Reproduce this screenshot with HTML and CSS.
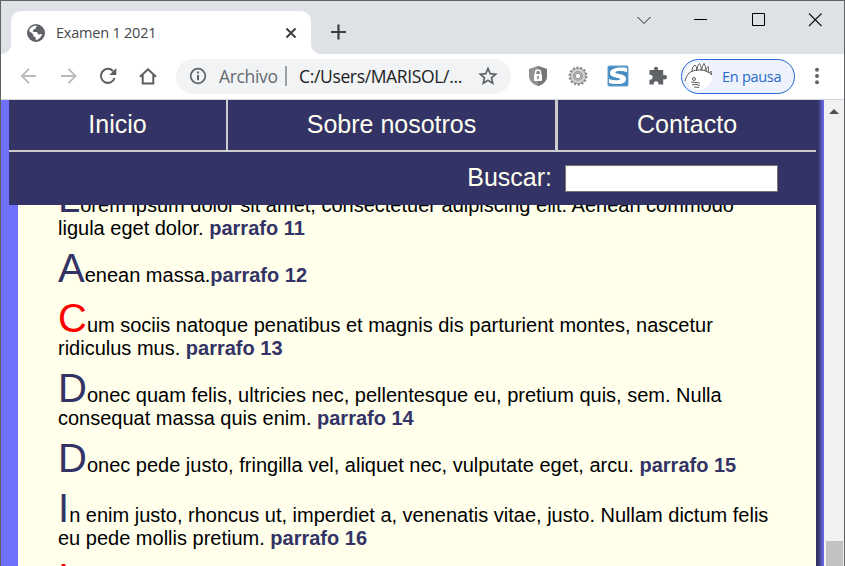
FILE: index.html
```html
<!DOCTYPE html>
<html lang="es">
<head>
<meta charset="utf-8">
<title>Examen 1 2021</title>
<link rel="stylesheet" href="styles.css">
</head>
<body>
<div class="window">
  <div class="tabstrip">
    <div class="tab">
      <svg class="globe" width="18" height="18" viewBox="0 0 18 18"><circle cx="9" cy="9" r="9" fill="#5f6368"/><path d="M10.4 2c-1 .8-1.600 1-1.700 2.200-.2.900-1.400.8-2 1.200-.8.600-.3 1.600-1.300 2.100L7.600 8c.7.200 2-.2 2.700.4.8.700 0 1.600 1 2 1.100.3 1.700-.7 3.600-.4-.5 3.200-3.200 5.800-6.200 6 .1-1.300.2-2.300-.6-2.900-.9-.5-1.600-.3-1.800-1.300-.1-.9.200-1.500-.6-2.100L2 6.900C2.900 3.700 6.400 1.200 10.400 2z" fill="#fff"/><path d="M10.400 2.300c2.500.5 4.400 2.300 4.700 5.200-1.500 0-2.200-.3-2.600-1.300-.3-.7-1.500-.4-2.500-.4z" fill="#5f6368"/></svg>
      <span class="tab-title">Examen 1 2021</span>
      <svg class="tab-close" width="12" height="12" viewBox="0 0 12 12"><path d="M1.500 1.500l9 9M10.500 1.500l-9 9" stroke="#3c4043" stroke-width="2"/></svg>
    </div>
    <svg class="new-tab" width="16" height="16" viewBox="0 0 16 16"><path d="M7.500 .5v15M0 8h15" stroke="#3c4043" stroke-width="2.200"/></svg>
    <div class="controls">
      <svg width="14" height="14" viewBox="0 0 14 14"><path d="M.5 4L7 10.500 13.500 4" fill="none" stroke="#222"/></svg>
      <svg width="14" height="14" viewBox="0 0 14 14"><path d="M0 6.500h13" stroke="#000"/></svg>
      <svg width="14" height="14" viewBox="0 0 14 14"><path d="M1.500 .5h12v12h-12z" fill="none" stroke="#000"/></svg>
      <svg width="14" height="14" viewBox="0 0 14 14"><path d="M1 .5l12.500 12.500M13.500 .5L1 13" stroke="#111" stroke-width="1.100"/></svg>
    </div>
  </div>
  <div class="toolbar">
    <svg class="back" width="18" height="18" viewBox="0 0 18 18"><path d="M17 9H3M10 1.800L2.800 9 10 16.200" fill="none" stroke="#bababc" stroke-width="1.800"/></svg>
    <svg class="forward" width="18" height="18" viewBox="0 0 18 18"><path d="M1 9h14.500M8.500 1.800L15.700 9l-7.200 7.200" fill="none" stroke="#bababc" stroke-width="1.800"/></svg>
    <svg class="reload" width="18" height="18" viewBox="0 0 18 18"><path d="M15.600 11A7 7 0 1 1 14 4" fill="none" stroke="#5a5d61" stroke-width="2"/><path d="M17.300 1v7h-7z" fill="#5a5d61"/></svg>
    <svg class="home" width="18" height="18" viewBox="0 0 18 18"><path d="M1 9.700L9 2.300l8 7.400M3.700 8v8.600h10.600V8" fill="none" stroke="#5a5d61" stroke-width="2"/></svg>
    <div class="omnibox">
      <svg width="18" height="18" viewBox="0 0 18 18"><circle cx="9" cy="9" r="7.300" fill="none" stroke="#5f6368" stroke-width="1.700"/><path d="M9 4.500v2M9 8v5.300" stroke="#5f6368" stroke-width="2"/></svg>
      <span class="scheme">Archivo</span>
      <span class="divider"></span>
      <span class="url">C:/Users/MARISOL/...</span>
      <svg class="star" width="20" height="20" viewBox="0 0 20 20"><path d="M10 2.500l2.200 5.100 5.500.5-4.200 3.700 1.200 5.400-4.700-2.900-4.700 2.900 1.200-5.400-4.200-3.700 5.500-.5z" fill="none" stroke="#5f6368" stroke-width="1.700"/></svg>
    </div>
    <svg class="shield" width="20" height="22" viewBox="0 0 20 22"><path d="M10 1l9 3v7c0 5-4 8.500-9 10-5-1.500-9-5-9-10V4z" fill="#929292"/><path d="M10 1l9 3v7c0 5-4 8.500-9 10z" fill="#777"/><rect x="6" y="9" width="8" height="7" rx="1" fill="#fff"/><path d="M7.500 9V7.500a2.500 2.500 0 0 1 5 0V9" fill="none" stroke="#fff" stroke-width="1.500"/><path d="M10 11v3" stroke="#777" stroke-width="1.500"/></svg>
    <svg class="gear" width="20" height="20" viewBox="0 0 20 20"><circle cx="10" cy="10" r="8.500" fill="none" stroke="#858585" stroke-width="2" stroke-dasharray="2.200 1.614"/><circle cx="10" cy="10" r="5.700" fill="none" stroke="#8a8a8a" stroke-width="4.600"/><circle cx="10" cy="10" r="6" fill="none" stroke="#cfcfcf" stroke-width="2.600"/><circle cx="10" cy="10" r="2.700" fill="#fff" stroke="#777" stroke-width=".8"/></svg>
    <svg class="snap" width="22" height="22" viewBox="0 0 22 22"><rect x="1" y="1" width="20" height="20" rx="1" fill="#438cc4" stroke="#6ca3cd"/><path d="M20 3v4.200c-3-1-6.500-1.400-10-.9-2.200.4-2.200 1.700 0 2.200 4.500.8 9 1.500 9 5.400 0 4.300-4.600 5.400-10 5.200-3-.1-5-.5-7-1.100v-4c3 1.200 6.400 1.600 9.500 1.100 2-.4 2-1.700 0-2.100-5-.8-8.700-2-8.500-5.300C3.200 3.200 12 1.800 20 3z" fill="#fff"/></svg>
    <svg class="puzzle" width="20" height="20" viewBox="0 0 20 20"><path d="M1.500 4h4.800C5.600 1.800 6.500.8 8 .8s2.500 1 1.800 3.200h5.400v5.200c2.200-.6 3.800.2 3.800 2s-1.600 2.600-3.800 2v5.300h-4.700c.3-2.300-.8-3.300-2.400-3.300s-2.600 1-2.300 3.300H1.500v-4.800c2 .3 3.200-.8 3.200-2.400s-1.200-2.700-3.200-2.400z" fill="#5f6368"/></svg>
    <div class="profile">
      <svg width="30" height="30" viewBox="0 0 30 30"><circle cx="15" cy="15" r="13.500" fill="#fff"/><g fill="none" stroke="#4a4a4a" stroke-width=".9"><path d="M1 20c1-4 2-5 4-8 3-2 6-3 9-3 5-.5 10 1 13.500 5M8 11c0-4 1-6 3-7 2 2 2 4 1.500 6M13 9c0-3 1-5 2.500-6.500C17 5 17.500 7 17 9.500M18 9.500c0-3 .5-5 2-7C22 5 21.500 8 21 10M22 10.500c0-2 1-4 2-5 1 2 .5 4 0 6M25.500 12l1.500-2 .5 4"/><path d="M7 21l9 1M8 24c3-1 5-1 8 1M10 26l5 .5"/><circle cx="10" cy="18" r="1.500"/></g></svg>
      <span>En pausa</span>
    </div>
    <svg class="menu" width="4" height="18" viewBox="0 0 4 18"><g fill="#5f6368"><circle cx="2" cy="2.700" r="2"/><circle cx="2" cy="9" r="2"/><circle cx="2" cy="15.300" r="2"/></g></svg>
  </div>
  <div class="viewport">
    <div class="page">
      <header>
        <nav>
          <a class="inicio">Inicio</a>
          <a class="nosotros">Sobre nosotros</a>
          <a class="contacto">Contacto</a>
        </nav>
        <div class="search"><label for="q">Buscar:</label><input id="q" type="text"></div>
      </header>
      <main>
        <p>Lorem ipsum dolor sit amet, consectetuer adipiscing elit. Aenean commodo ligula eget dolor. <b>parrafo 11</b></p>
        <p>Aenean massa.<b>parrafo 12</b></p>
        <p class="red">Cum sociis natoque penatibus et magnis dis parturient montes, nascetur ridiculus mus. <b>parrafo 13</b></p>
        <p>Donec quam felis, ultricies nec, pellentesque eu, pretium quis, sem. Nulla consequat massa quis enim. <b>parrafo 14</b></p>
        <p>Donec pede justo, fringilla vel, aliquet nec, vulputate eget, arcu. <b>parrafo 15</b></p>
        <p>In enim justo, rhoncus ut, imperdiet a, venenatis vitae, justo. Nullam dictum felis eu pede mollis pretium. <b>parrafo 16</b></p>
        <p class="red">I</p>
      </main>
    </div>
    <div class="edge"></div>
    <div class="scrollbar"><span class="arrow"></span><span class="thumb"></span></div>
  </div>
</div>
</body>
</html>
```
FILE: styles.css
```css
* { box-sizing: border-box; }
body { margin: 0; overflow: hidden; }
svg { display: block; flex: none; }

.window {
  width: 845px;
  height: 566px;
  border: 1px solid #606164;
  border-bottom: 0;
  background: #fff;
  overflow: hidden;
  font-family: "Open Sans", "Noto Sans", sans-serif;
}

.tabstrip {
  display: flex;
  height: 53px;
  background: #dee1e6;
}
.tab {
  display: flex;
  align-items: center;
  width: 300px;
  height: 43px;
  margin: 10px 0 0 10px;
  padding: 0 14px 0 16px;
  border-radius: 10px 10px 0 0;
  background: #fff;
  position: relative;
}
.tab::before, .tab::after {
  content: "";
  position: absolute;
  bottom: 0;
  width: 10px;
  height: 10px;
}
.tab::before { left: -10px; background: radial-gradient(circle at 0 0, #dee1e6 9.500px, #fff 10.500px); }
.tab::after { right: -10px; background: radial-gradient(circle at 100% 0, #dee1e6 9.500px, #fff 10.500px); }
.tab-title { margin-left: 11px; font-size: 14.500px; letter-spacing: -.22px; color: #45484c; white-space: nowrap; }
.tab-close { margin-left: auto; }
.new-tab { margin: 23px 0 0 20px; }
.controls { display: flex; gap: 43px; margin: 12px 22px 0 auto; }

.toolbar {
  display: flex;
  align-items: center;
  height: 46px;
  padding: 0 25px 1px 18px;
  border-bottom: 1px solid #d4d5d8;
  white-space: nowrap;
}
.forward { margin-left: 23px; }
.reload { margin-left: 21px; }
.home { margin-left: 22px; }
.omnibox {
  display: flex;
  align-items: center;
  flex: none;
  width: 335px;
  height: 35px;
  margin-left: 19px;
  padding: 0 13px;
  border-radius: 18px;
  background: #f1f3f4;
  font-size: 17.500px;
}
.scheme { width: 59px; margin-left: 12px; color: #666a6f; letter-spacing: -.35px; }
.divider { width: 2px; height: 20px; margin-left: 7px; background: #9b9ea2; }
.url { margin-left: 12px; color: #202124; letter-spacing: -.35px; }
.star { margin: 0 0 0 auto; }
.shield { margin-left: 17px; }
.gear { margin-left: 20px; }
.snap { margin-left: 19px; }
.puzzle { margin-left: 19px; }
.profile {
  display: flex;
  align-items: center;
  flex: none;
  width: 114px;
  height: 35px;
  margin-left: 13px;
  padding-left: 2px;
  border: 1.500px solid #2368d0;
  border-radius: 18px;
  background: #edf2fc;
  color: #2869cb;
  font-size: 14.500px;
  letter-spacing: -.28px;
}
.profile span { margin-left: 8px; }
.menu { margin-left: auto; }

.viewport {
  display: flex;
  height: 466px;
  font-family: "Liberation Sans", Arial, sans-serif;
}
.page {
  display: flex;
  flex-direction: column;
  width: 815px;
  padding-left: 8px;
  background: #7070ff;
}
header { flex: none; height: 105px; background: #336; color: #fffff0; font-size: 25px; }
nav { display: flex; height: 52px; border-bottom: 2px solid #ccc; }
nav a { display: flex; align-items: center; justify-content: center; padding-bottom: 2px; }
.inicio { width: 219px; border-right: 2px solid #ccc; }
.nosotros { width: 330px; border-right: 3px solid #ccc; }
.contacto { flex: 1; }
.search { display: flex; align-items: center; justify-content: flex-end; height: 53px; padding-right: 38px; }
.search label { padding-bottom: 2px; }
.search input { width: 213px; height: 27px; margin: 0 0 0 13px; border: 1px solid #767676; background: #fff; }

main {
  flex: 1;
  min-height: 0;
  overflow: hidden;
  margin-left: 9px;
  padding: 0 40px;
  background: #ffffec;
  color: #000;
  font-size: 20px;
  line-height: 1;
}
main p { margin: 0 0 10px; }
main p:first-child { margin-top: -27px; }
main p::first-letter { font-size: 40px; color: #336; }
main .red::first-letter { color: #f00; }
main b { color: #336; }

.edge { width: 8px; background: linear-gradient(90deg, #336 0, #336 25%, #66d 90%, #6666e8 100%); }
.scrollbar { display: flex; flex-direction: column; align-items: center; width: 20px; background: #f1f1f1; }
.arrow { margin-top: 9px; border: 5px solid transparent; border-top: 0; border-bottom: 5px solid #505050; }
.thumb { width: 17px; flex: 1; margin-top: 427px; background: #c1c1c1; }
```
